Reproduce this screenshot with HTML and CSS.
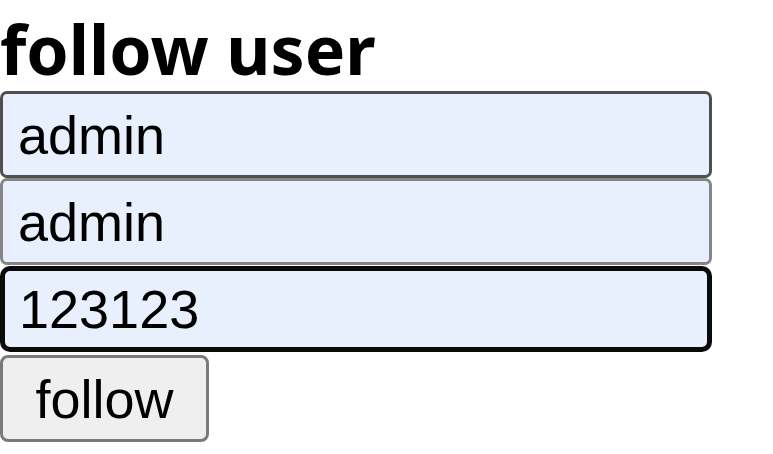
FILE: index.html
```html
<!DOCTYPE html>
<html>
<head>
<meta charset="utf-8">
<link rel="stylesheet" href="styles.css">
</head>
<body>
<div class="page">
  <h1 class="title">follow user</h1>
  <form class="form">
    <input class="field field-hover" type="text" value="admin">
    <input class="field" type="text" value="admin">
    <input class="field field-focus" type="text" value="123123">
    <button class="btn" type="button">follow</button>
  </form>
</div>
</body>
</html>
```
FILE: styles.css
```css
html, body {
  margin: 0;
  padding: 0;
  background: #ffffff;
}
.page {
  padding-top: 15px;
}
.title {
  margin: 0 0 8px 0;
  font-family: "Noto Sans", "Open Sans", sans-serif;
  font-weight: 700;
  font-size: 68px;
  line-height: 68px;
  color: #000;
}
.form {
  display: flex;
  flex-direction: column;
  align-items: flex-start;
  margin: 0;
}
.field {
  box-sizing: border-box;
  width: 712px;
  height: 87px;
  margin: 0;
  padding: 0 0 0 15px;
  border: 3px solid #858585;
  border-radius: 7px;
  background: #e8f0fe;
  font-family: "Liberation Sans", Arial, sans-serif;
  font-size: 54px;
  color: #000;
  outline: none;
}
.field-hover {
  border-color: #4f4f4f;
}
.field-focus {
  border: 5px solid #0a0a0a;
  border-radius: 10px;
  padding-left: 14px;
  height: 86px;
  margin-top: 1px;
}
.btn {
  box-sizing: border-box;
  width: 209px;
  height: 87px;
  margin-top: 3px;
  padding: 0;
  border: 3px solid #7a7a7a;
  border-radius: 8px;
  background: #efefef;
  font-family: "Liberation Sans", Arial, sans-serif;
  font-size: 54px;
  color: #000;
}
```
